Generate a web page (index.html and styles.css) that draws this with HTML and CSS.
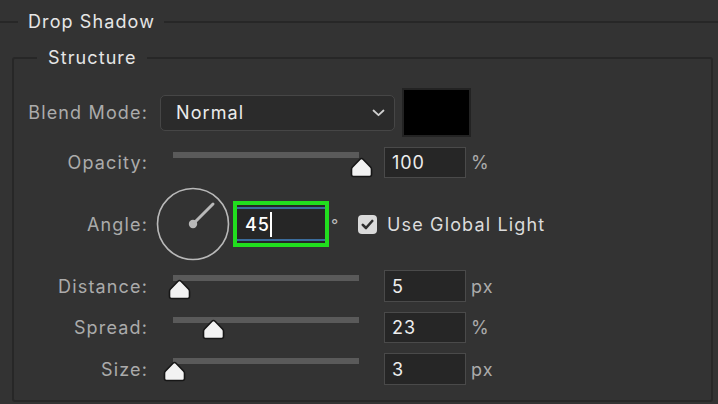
FILE: index.html
```html
<!DOCTYPE html>
<html>
<head>
<meta charset="utf-8">
<link rel="stylesheet" href="styles.css">
</head>
<body>
<fieldset class="group">
  <legend class="group-title">Drop Shadow</legend>
  <fieldset class="section">
    <legend class="section-title">Structure</legend>
    <div class="rows">
      <div class="row row-blend">
        <span class="lbl">Blend Mode:</span>
        <div class="select">
          <span class="select-value">Normal</span>
          <svg class="chev" width="13" height="8" viewBox="0 0 13 8"><path d="M1.5 1.5 L6.5 6.2 L11.5 1.5" fill="none" stroke="#cfcfcf" stroke-width="1.8" stroke-linecap="round" stroke-linejoin="round"/></svg>
        </div>
        <div class="swatch"></div>
      </div>

      <div class="row row-h31">
        <span class="lbl">Opacity:</span>
        <div class="slider">
          <div class="track"></div>
          <svg class="thumb" style="left:190px;top:10px" width="23" height="21" viewBox="0 0 23 21"><path d="M11.5 1.5 Q12.3 1.5 13 2.2 L20.5 10 Q21.5 11 21.5 12.4 L21.5 17.5 Q21.5 19.5 19.5 19.5 L3.5 19.5 Q1.5 19.5 1.5 17.5 L1.5 12.4 Q1.5 11 2.5 10 L10 2.2 Q10.7 1.5 11.5 1.5 Z" fill="#f2f2f2" stroke="#161616" stroke-width="1.6"/></svg>
        </div>
        <div class="num">100</div>
        <span class="unit">%</span>
      </div>

      <div class="row row-angle">
        <span class="lbl">Angle:</span>
        <svg class="dial" width="74" height="74" viewBox="0 0 74 74">
          <circle cx="37" cy="37" r="35.5" fill="none" stroke="#b9b9b9" stroke-width="1.6"/>
          <line x1="37" y1="37" x2="57" y2="17" stroke="#b9b9b9" stroke-width="3" stroke-linecap="round"/>
          <circle cx="37" cy="37" r="4.2" fill="#b9b9b9"/>
        </svg>
        <div class="focus-ring">
          <div class="angle-input"><span class="angle-value">45</span><span class="caret"></span></div>
        </div>
        <span class="deg">°</span>
        <span class="check">
          <svg width="13" height="11" viewBox="0 0 13 11"><path d="M1.8 5.8 L5 9 L11.2 2" fill="none" stroke="#2e2e2e" stroke-width="2.6" stroke-linecap="round" stroke-linejoin="round"/></svg>
        </span>
        <span class="check-label">Use Global Light</span>
      </div>

      <div class="row row-h32">
        <span class="lbl">Distance:</span>
        <div class="slider">
          <div class="track"></div>
          <svg class="thumb" style="left:8px;top:9px" width="23" height="21" viewBox="0 0 23 21"><path d="M11.5 1.5 Q12.3 1.5 13 2.2 L20.5 10 Q21.5 11 21.5 12.4 L21.5 17.5 Q21.5 19.5 19.5 19.5 L3.5 19.5 Q1.5 19.5 1.5 17.5 L1.5 12.4 Q1.5 11 2.5 10 L10 2.2 Q10.7 1.5 11.5 1.5 Z" fill="#f2f2f2" stroke="#161616" stroke-width="1.6"/></svg>
        </div>
        <div class="num">5</div>
        <span class="unit">px</span>
      </div>

      <div class="row row-h31">
        <span class="lbl">Spread:</span>
        <div class="slider">
          <div class="track"></div>
          <svg class="thumb" style="left:42px;top:7px" width="23" height="21" viewBox="0 0 23 21"><path d="M11.5 1.5 Q12.3 1.5 13 2.2 L20.5 10 Q21.5 11 21.5 12.4 L21.5 17.5 Q21.5 19.5 19.5 19.5 L3.5 19.5 Q1.5 19.5 1.5 17.5 L1.5 12.4 Q1.5 11 2.5 10 L10 2.2 Q10.7 1.5 11.5 1.5 Z" fill="#f2f2f2" stroke="#161616" stroke-width="1.6"/></svg>
        </div>
        <div class="num">23</div>
        <span class="unit">%</span>
      </div>

      <div class="row row-h32">
        <span class="lbl">Size:</span>
        <div class="slider">
          <div class="track"></div>
          <svg class="thumb" style="left:3px;top:8px" width="23" height="21" viewBox="0 0 23 21"><path d="M11.5 1.5 Q12.3 1.5 13 2.2 L20.5 10 Q21.5 11 21.5 12.4 L21.5 17.5 Q21.5 19.5 19.5 19.5 L3.5 19.5 Q1.5 19.5 1.5 17.5 L1.5 12.4 Q1.5 11 2.5 10 L10 2.2 Q10.7 1.5 11.5 1.5 Z" fill="#f2f2f2" stroke="#161616" stroke-width="1.6"/></svg>
        </div>
        <div class="num">3</div>
        <span class="unit">px</span>
      </div>
    </div>
  </fieldset>
</fieldset>
</body>
</html>
```

FILE: styles.css
```css
* { box-sizing: border-box; }
html, body {
  margin: 0;
  padding: 0;
  width: 718px;
  height: 404px;
  overflow: hidden;
  background: #333333;
  font-family: Inter, "Liberation Sans", sans-serif;
  font-size: 18px;
  color: #e4e4e4;
}

.group {
  margin: 11px 0 0 0;
  padding: 0;
  border: none;
  border-top: 2px solid #272727;
  min-inline-size: 0;
}
.group-title {
  margin-left: 18px;
  padding: 0 9px 0 10px;
  line-height: 22px;
  font-size: 18px;
  letter-spacing: 1.1px;
  color: #e6e6e6;
}

.section {
  margin: 14px 5px 0 12px;
  padding: 19px 0 15px 0;
  border: 2px solid #272727;
  border-radius: 3px;
  min-inline-size: 0;
}
.section-title {
  margin-left: 23px;
  padding: 0 10px 0 11px;
  line-height: 22px;
  font-size: 18px;
  letter-spacing: 1.1px;
  color: #e6e6e6;
}

.rows {
  display: flex;
  flex-direction: column;
  gap: 10px;
}
.row {
  display: flex;
  align-items: center;
}
.row-blend { height: 49px; }
.row-h31 { height: 31px; }
.row-h32 { height: 32px; }
.row-angle { height: 72px; }

.lbl {
  width: 134px;
  flex: none;
  text-align: right;
  color: #ababab;
  letter-spacing: 1.15px;
  white-space: nowrap;
}

.select {
  margin-left: 12px;
  width: 235px;
  height: 36px;
  flex: none;
  display: flex;
  align-items: center;
  justify-content: space-between;
  padding: 0 9px 0 15px;
  background: #2b2b2b;
  border: 1.5px solid #464646;
  border-radius: 5px;
}
.select-value { color: #ececec; letter-spacing: 1.1px; }
.chev { display: block; }

.swatch {
  margin-left: 7px;
  width: 69px;
  height: 49px;
  flex: none;
  background: #000;
  border: 2px solid #232323;
}

.slider {
  position: relative;
  margin-left: 12px;
  width: 212px;
  height: 100%;
  flex: none;
}
.track {
  margin: 5px 0 0 13px;
  width: 186px;
  height: 6px;
  background: #5a5a5a;
}
.thumb {
  position: absolute;
  display: block;
}

.num {
  margin-left: 12px;
  width: 82px;
  height: 100%;
  flex: none;
  display: flex;
  align-items: center;
  padding-left: 7px;
  background: #262626;
  border: 1.5px solid #4a4a4a;
  color: #ededed;
  letter-spacing: 0.9px;
}
.unit {
  margin-left: 5px;
  color: #ababab;
  letter-spacing: 1.1px;
}

.dial {
  margin-left: 8px;
  flex: none;
  display: block;
}
.focus-ring {
  margin-left: 3px;
  width: 96px;
  height: 46px;
  flex: none;
  border: 4px solid #21de1e;
  background: #262626;
  padding: 2px 0;
}
.angle-input {
  height: 100%;
  border-top: 2px solid #3b6c9c;
  border-bottom: 2px solid #3b6c9c;
  display: flex;
  align-items: center;
  padding-left: 8px;
}
.angle-value {
  color: #ffffff;
  font-weight: 500;
  letter-spacing: 0.9px;
}
.caret {
  width: 2px;
  height: 25px;
  margin-left: 0;
  background: #ffffff;
}
.deg {
  width: 29px;
  flex: none;
  align-self: flex-start;
  margin-top: 29px;
  padding-left: 2px;
  color: #bdbdbd;
  font-size: 16px;
  line-height: 16px;
}
.check {
  width: 19px;
  height: 19px;
  flex: none;
  border-radius: 4px;
  background: #dadada;
  display: flex;
  align-items: center;
  justify-content: center;
}
.check svg { display: block; }
.check-label {
  margin-left: 10px;
  color: #dcdcdc;
  letter-spacing: 1.15px;
  white-space: nowrap;
}
```
